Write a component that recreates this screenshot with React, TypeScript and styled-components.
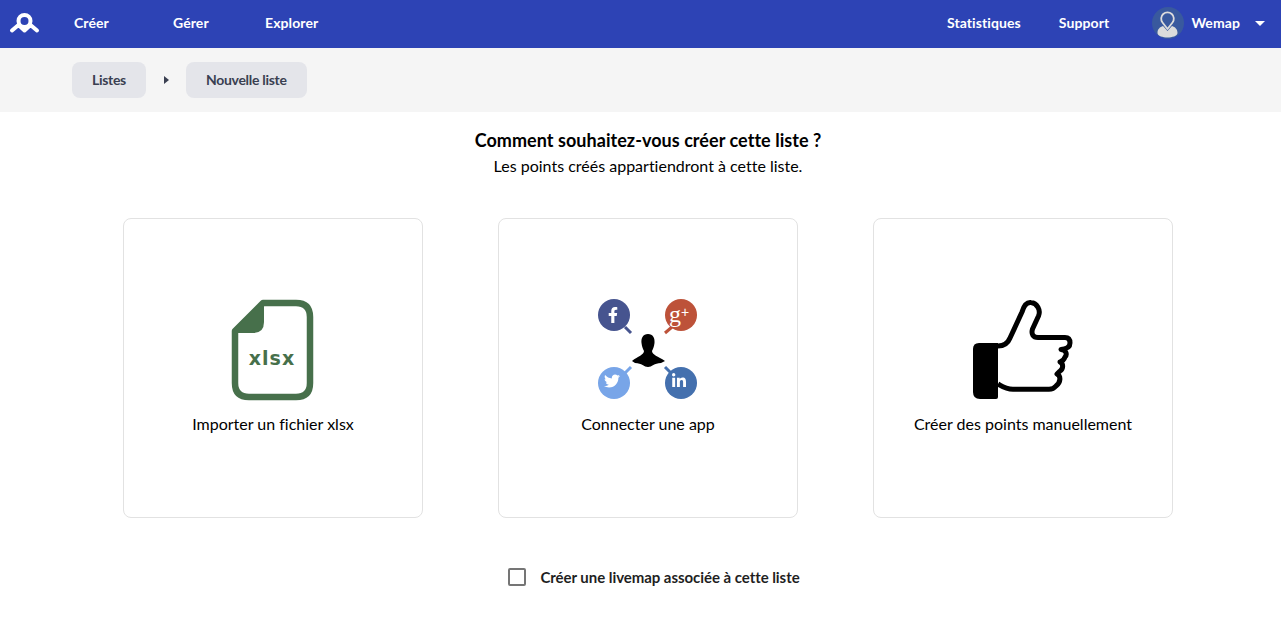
import React from 'react';
import styled, { createGlobalStyle } from 'styled-components';
import { FaFacebookF, FaLinkedinIn, FaTwitter } from 'react-icons/fa';

const GlobalStyle = createGlobalStyle`
  html, body {
    margin: 0;
    padding: 0;
    background: #fff;
    font-family: Lato, "Liberation Sans", sans-serif;
    font-variant-ligatures: none;
    color: #000;
  }
  * {
    box-sizing: border-box;
  }
`;

const Page = styled.div`
  min-height: 617px;
  overflow: hidden;
`;

const Header = styled.header`
  height: 48px;
  padding-bottom: 4px;
  background: #2d43b5;
  display: flex;
  align-items: center;
  color: #fff;
  font-size: 14px;
  font-weight: 700;
  letter-spacing: 0.1px;
`;

const LogoLink = styled.a`
  width: 74px;
  padding: 3px 0 0 9px;
  display: flex;
  align-items: center;
`;

const NavLink = styled.a<{ $width?: number }>`
  width: ${(p) => (p.$width ? `${p.$width}px` : 'auto')};
  cursor: pointer;
`;

const SupportLink = styled(NavLink)`
  margin-left: 38px;
`;

const Spacer = styled.div`
  flex: 1;
`;

const UserMenu = styled.div`
  display: flex;
  align-items: center;
  margin: 0 16px 0 43px;
`;

const Avatar = styled.div`
  width: 32px;
  height: 32px;
  margin: 2px 7px 0 0;
  border-radius: 50%;
  background: #39599e;
  overflow: hidden;
`;

const Caret = styled.span`
  width: 0;
  height: 0;
  margin: 2px 0 0 15px;
  border-left: 5px solid transparent;
  border-right: 5px solid transparent;
  border-top: 5px solid #fff;
`;

const Breadcrumb = styled.nav`
  height: 64px;
  background: #f5f5f5;
  padding-left: 72px;
  display: flex;
  align-items: center;
`;

const Crumb = styled.a`
  height: 36px;
  padding: 0 20px 2px;
  border-radius: 8px;
  background: #e4e5ea;
  color: #3a3f51;
  font-size: 14px;
  font-weight: 700;
  letter-spacing: -0.3px;
  display: flex;
  align-items: center;
`;

const CrumbArrow = styled.span`
  width: 0;
  height: 0;
  margin: 0 17px 0 18px;
  border-top: 4px solid transparent;
  border-bottom: 4px solid transparent;
  border-left: 5px solid #3a3f51;
`;

const Main = styled.main`
  padding-left: 15px;
  display: flex;
  flex-direction: column;
  align-items: center;
`;

const Title = styled.h1`
  margin: 16px 0 0;
  font-size: 18px;
  line-height: 24px;
  font-weight: 700;
  letter-spacing: 0.05px;
`;

const Subtitle = styled.p`
  margin: 4px 0 0;
  font-size: 16px;
  line-height: 20px;
`;

const Choices = styled.div`
  display: flex;
  gap: 75px;
  margin-top: 42px;
`;

const Card = styled.a`
  width: 300px;
  height: 300px;
  border: 1px solid #e2e2e2;
  border-radius: 8px;
  display: flex;
  flex-direction: column;
  align-items: center;
  padding-top: 80px;
  font-size: 16px;
  cursor: pointer;
`;

const CardIcon = styled.svg`
  width: 100px;
  height: 102px;
  display: block;
`;

const CardLabel = styled.span`
  margin-top: 13px;
  line-height: 20px;
`;

const LivemapOption = styled.label`
  display: flex;
  align-items: center;
  margin: 50px 0 0 12px;
  font-size: 15px;
  font-weight: 700;
  letter-spacing: -0.05px;
  color: #1f1f1f;
`;

const Checkbox = styled.span`
  width: 18px;
  height: 18px;
  border: 2px solid #757575;
  border-radius: 2px;
  margin-right: 14px;
`;

const XlsxIcon = () => (
  <CardIcon viewBox="0 0 100 102">
    <path
      d="M40 4 H73 Q87 4 87 18 V84 Q87 98 73 98 H26 Q12 98 12 84 V32 Z"
      fill="#fff"
      stroke="#47704b"
      strokeWidth="6.5"
      strokeLinejoin="round"
    />
    <path d="M11 31 L39 2 H41 V23 Q41 34 30 34 H11 Z" fill="#47704b" />
    <text x="49" y="66" textAnchor="middle" fontFamily="'DejaVu Sans', sans-serif" fontWeight="700" fontSize="19" letterSpacing="1" fill="#47704b">
      xlsx
    </text>
  </CardIcon>
);

const AppIcon = () => (
  <CardIcon viewBox="0 0 100 102">
    <g strokeWidth="3" fill="none">
      <path d="M27 28 L33 34" stroke="#46548f" />
      <path d="M74 28 L67 34" stroke="#bd5239" />
      <path d="M27 74 L33 68" stroke="#78a5e8" />
      <path d="M73 74 L67 68" stroke="#4470ae" />
    </g>
    <circle cx="16" cy="16" r="16" fill="#46548f" />
    <circle cx="83" cy="16" r="16" fill="#bd5239" />
    <circle cx="16" cy="84" r="16" fill="#78a5e8" />
    <circle cx="83" cy="84" r="16" fill="#4470ae" />
    <FaFacebookF x="7" y="8" width="18" height="18" color="#fff" />
    <text x="71" y="23" fontFamily="'Liberation Serif', serif" fontSize="24" fill="#fff">
      g
    </text>
    <text x="83" y="18" fontFamily="'Liberation Sans', sans-serif" fontSize="14" fill="#fff">
      +
    </text>
    <FaTwitter x="6" y="74" width="20" height="20" color="#fff" />
    <FaLinkedinIn x="73" y="74" width="20" height="20" color="#fff" />
    <path
      d="M50 35 C55 35 57 39 56.5 44 C56 48 55 50 54 52 C54 56 60 57 67 62 L63 64 C56 64 54 68 50 68 C46 68 44 64 37 64 L34 62 C40 57 46 56 46 52 C45 50 44 48 43.5 44 C43 39 45 35 50 35 Z"
      fill="#000"
    />
  </CardIcon>
);

const ThumbIcon = () => (
  <CardIcon viewBox="0 0 100 102">
    <path
      d="M25 47 C31 47 35 44 37 39 L49 13 C51 6 54 3 58 3.5 C64 4 68 11 65.5 17 L59.5 30 C58 35 60 38.5 65 38.5 H92 C96 38.5 97 41 97 44 C97 48 94 50 88 50.5 C94 51 94 56 92 58 C91 61 89 62.5 87 63 C91 65 90 70 87 72 L84 75 C88 77 88 83 83 87 C81 89.5 79 90.3 76 90.3 H40 C33 90.3 30 88 25 85"
      fill="#fff"
      stroke="#000"
      strokeWidth="5"
      strokeLinejoin="round"
    />
    <path d="M6 44 H25 V98 Q25 100 23 100 H7 Q0 100 0 93 V50 Q0 44 6 44 Z" fill="#000" />
  </CardIcon>
);

const App: React.FC = () => {
  return (
    <Page>
      <GlobalStyle />
      <Header>
        <LogoLink>
          <svg width="31" height="24" viewBox="0 0 31 24">
            <g fill="none" stroke="#fff" strokeWidth="4" strokeLinecap="round" strokeLinejoin="round">
              <circle cx="15.5" cy="9" r="6" />
              <path d="M3 18.5 L9.5 13 L15.5 18.5 L21.5 13 L28 18.5" />
            </g>
          </svg>
        </LogoLink>
        <NavLink $width={99}>Créer</NavLink>
        <NavLink $width={92}>Gérer</NavLink>
        <NavLink>Explorer</NavLink>
        <Spacer />
        <NavLink>Statistiques</NavLink>
        <SupportLink>Support</SupportLink>
        <UserMenu>
          <Avatar>
            <svg width="32" height="32" viewBox="0 0 32 32">
              <path d="M5.5 26 C5.5 22 8 20 11 19 L15.5 24 L20 19 C23 20 25.5 22 25.5 26 C25.5 29 20 30.5 15.5 30.5 C11 30.5 5.5 29 5.5 26 Z" fill="#dcdcdc" />
              <path d="M15.5 22 L10.5 15.5 A6.3 6.3 0 1 1 20.5 15.5 Z" fill="#39599e" stroke="#dcdcdc" strokeWidth="1.8" strokeLinejoin="round" />
            </svg>
          </Avatar>
          Wemap
          <Caret />
        </UserMenu>
      </Header>
      <Breadcrumb>
        <Crumb>Listes</Crumb>
        <CrumbArrow />
        <Crumb>Nouvelle liste</Crumb>
      </Breadcrumb>
      <Main>
        <Title>Comment souhaitez-vous créer cette liste ?</Title>
        <Subtitle>Les points créés appartiendront à cette liste.</Subtitle>
        <Choices>
          <Card>
            <XlsxIcon />
            <CardLabel>Importer un fichier xlsx</CardLabel>
          </Card>
          <Card>
            <AppIcon />
            <CardLabel>Connecter une app</CardLabel>
          </Card>
          <Card>
            <ThumbIcon />
            <CardLabel>Créer des points manuellement</CardLabel>
          </Card>
        </Choices>
        <LivemapOption>
          <Checkbox />
          Créer une livemap associée à cette liste
        </LivemapOption>
      </Main>
    </Page>
  );
};

export default App;
